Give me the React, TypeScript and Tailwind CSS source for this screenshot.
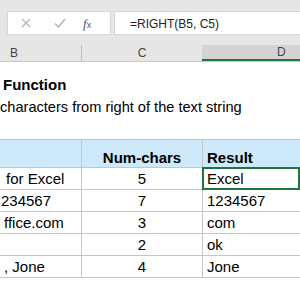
import React from 'react';

const rows = [
  { b: 'for Excel', bOffset: 'ml-[6px]', c: '5', d: 'Excel', active: true },
  { b: '234567', bOffset: 'ml-[1px]', c: '7', d: '1234567' },
  { b: 'ffice.com', bOffset: 'ml-[4px]', c: '3', d: 'com' },
  { b: '', bOffset: '', c: '2', d: 'ok' },
  { b: ', Jone', bOffset: 'ml-[4px]', c: '4', d: 'Jone' },
];

export default function App() {
  return (
    <div className="w-[300px] h-[300px] overflow-hidden bg-white text-black font-['Liberation_Sans',Arial,sans-serif]">
      {/* formula bar */}
      <div className="h-[45px] bg-[#e6e6e6] pt-[11px] flex">
        <div className="ml-[7px] w-[104px] h-[24px] bg-white border border-[#d6d6d6] flex items-center">
          <svg className="ml-[13px]" width="10" height="10" viewBox="0 0 10 10">
            <path d="M1 1 L9 9 M9 1 L1 9" stroke="#b5b5b5" strokeWidth="1.3" fill="none" />
          </svg>
          <svg className="ml-[23px]" width="12" height="10" viewBox="0 0 12 10">
            <path d="M1 5.5 L4.5 9 L11 1" stroke="#b5b5b5" strokeWidth="1.5" fill="none" />
          </svg>
          <span className="ml-[17px] text-[13px] italic text-[#555] font-['Liberation_Serif',serif] leading-none">
            f<span className="text-[9px] not-italic font-['Liberation_Sans',sans-serif]">x</span>
          </span>
        </div>
        <div className="ml-[3px] flex-1 h-[24px] bg-white border border-r-0 border-[#d6d6d6] pl-[15px] pt-[4px] text-[12px] leading-[16px] text-[#222]">
          =RIGHT(B5, C5)
        </div>
      </div>

      {/* column headers */}
      <div className="flex h-[17px] text-[12px] text-[#444] bg-[#e6e6e6] border-b border-[#c8c8c8]">
        <div className="w-[82px] border-r border-[#bdbdbd] flex items-center pl-[10px]">B</div>
        <div className="w-[120px] flex items-center justify-center">C</div>
        <div className="flex-1 bg-[#d3d3d3] border-b-2 border-[#217346] flex items-center pl-[75px]">D</div>
      </div>

      {/* sheet content */}
      <div className="pl-[3px] pt-[12px]">
        <div className="text-[15px] font-bold leading-[22px]">Function</div>
        <div className="ml-[-3px] text-[14.6px] leading-[22px]">characters from right of the text string</div>
      </div>

      <div className="mt-[21px] border-t border-[#c6c6c6] text-[15px]">
        <div className="flex h-[28px] bg-[#cde9fa] border-b border-[#c6c6c6] font-bold">
          <div className="w-[82px] border-r border-[#c6c6c6]" />
          <div className="w-[121px] border-r border-[#c6c6c6] flex items-end justify-center pb-[1px] leading-[17px]">
            Num-chars
          </div>
          <div className="flex-1 flex items-end pl-[4px] pb-[1px] leading-[17px]">Result</div>
        </div>
        {rows.map((r, i) => (
          <div key={i} className="flex h-[22px] border-b border-[#c6c6c6] leading-[18px]">
            <div className="w-[82px] border-r border-[#c6c6c6] whitespace-nowrap flex items-end pb-[1px]">
              <span className={r.bOffset}>{r.b}</span>
            </div>
            <div className="w-[121px] border-r border-[#c6c6c6] flex items-end justify-center pb-[1px]">{r.c}</div>
            <div className="relative flex-1 flex items-end pl-[4px] pb-[1px]">
              {r.d}
              {r.active && (
                <div className="absolute top-[-1px] left-[-1px] right-0 bottom-[-1px] border-2 border-[#217346]" />
              )}
            </div>
          </div>
        ))}
      </div>
    </div>
  );
}
